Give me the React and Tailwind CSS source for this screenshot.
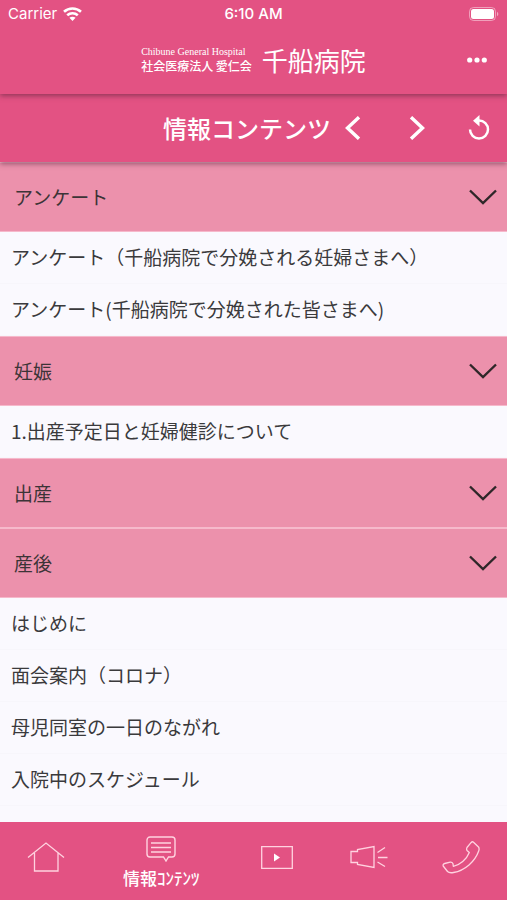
import { useState } from 'react';

const sections = [
  {
    id: 'survey',
    title: 'アンケート',
    items: ['アンケート（千船病院で分娩される妊婦さまへ）', 'アンケート(千船病院で分娩された皆さまへ)'],
  },
  { id: 'pregnancy', title: '妊娠', items: ['1.出産予定日と妊婦健診について'] },
  { id: 'birth', title: '出産', items: [] },
  {
    id: 'after',
    title: '産後',
    items: ['はじめに', '面会案内（コロナ）', '母児同室の一日のながれ', '入院中のスケジュール', '・沐浴のしかた'],
  },
];

const HomeIcon = () => (
  <svg width="38" height="30" viewBox="0 0 38 30" fill="none" stroke="currentColor" strokeWidth="1.3">
    <path d="M1 15.500 19 1l18 14.500M7.500 11v18h23.500V11" />
  </svg>
);

const ContentsIcon = () => (
  <svg width="30" height="26" viewBox="0 0 30 26" fill="none" stroke="currentColor" strokeWidth="1.4">
    <path d="M4 1h22a3 3 0 0 1 3 3v14a3 3 0 0 1-3 3h-3.500L20 25l-2.500-4H4a3 3 0 0 1-3-3V4a3 3 0 0 1 3-3z" />
    <path d="M5 7h20M5 11.500h20M5 16h20" />
  </svg>
);

const MovieIcon = () => (
  <svg width="32" height="23" viewBox="0 0 32 23" fill="none" stroke="currentColor" strokeWidth="1.3">
    <path d="M.7.700h30.600v21.600H.7z" />
    <path d="M13 7.500v8l6-4z" fill="#fff" stroke="none" />
  </svg>
);

const NewsIcon = () => (
  <svg width="38" height="24" viewBox="0 0 38 24" fill="none" stroke="currentColor" strokeWidth="1.3">
    <path d="M1 6.500h6.500V4.500L24 1.500v21L7.500 19.500v-2H1z" />
    <path d="M27.500 7.500 35 2.500M28 12.500h9.500M27.500 17 35 21.500" />
  </svg>
);

const PhoneIcon = () => (
  <svg width="38" height="33" viewBox="0 0 38 33" fill="none" stroke="currentColor" strokeWidth="1.3" strokeLinejoin="round">
    <path d="M31.500 1.200 36.500 6c.800 1 .700 2.500.200 4C33 20.500 23 29.500 11.500 31.500c-2.500.500-4.500.500-6-1L1.200 25c-.400-1.500.300-2.200 1.500-2.500l5.500-1.300c1.500-.200 2.200.300 2.800 1.500l.300 2.600C18 24 24.500 18.500 27.300 11.500L25 9.500c-.500-1-.500-2 0-3l4-4.800c.800-.900 1.700-1.200 2.500-.500z" />
  </svg>
);

const tabs = [
  { id: 'home', label: 'ホーム', Icon: HomeIcon },
  { id: 'contents', label: '情報ｺﾝﾃﾝﾂ', Icon: ContentsIcon },
  { id: 'movie', label: '動画', Icon: MovieIcon },
  { id: 'news', label: 'お知らせ', Icon: NewsIcon },
  { id: 'phone', label: '電話', Icon: PhoneIcon },
];

function StatusBar() {
  return (
    <div className="grid grid-cols-3 items-center h-7 px-2 text-[15px] font-['Inter',sans-serif]">
      <div className="flex items-center gap-1.5">
        <span>Carrier</span>
        <svg width="19" height="14" viewBox="0 0 19 14" fill="none" stroke="currentColor" strokeWidth="2.6">
          <path d="M1 4.800C5.800.400 13.200.400 18 4.800M4.200 8.300c3-2.700 7.600-2.700 10.600 0" />
          <path d="M9.500 14 6.400 10.800c1.800-1.500 4.400-1.500 6.200 0z" fill="currentColor" stroke="none" />
        </svg>
      </div>
      <span className="text-center font-medium">6:10 AM</span>
      <svg className="justify-self-end" width="30" height="14" viewBox="0 0 30 14" fill="none">
        <rect x=".5" y=".5" width="26" height="13" rx="4" stroke="currentColor" strokeOpacity=".45" />
        <rect x="2" y="2" width="23" height="10" rx="2.500" fill="currentColor" />
        <path d="M28 4.800c1.800.800 1.800 3.600 0 4.400z" fill="currentColor" fillOpacity=".5" />
      </svg>
    </div>
  );
}

function Section({ section, open, onToggle }) {
  return (
    <section>
      <h2>
        <button
          type="button"
          aria-expanded={open}
          onClick={onToggle}
          className="flex items-center justify-between w-full h-[70px] pl-3.5 pr-2.5 bg-[#ec91ac] border-y border-[#f6b9cb] text-[19px] text-[#3c3437]"
        >
          {section.title}
          <svg width="28" height="16" viewBox="0 0 28 16" fill="none" stroke="#2f2729" strokeWidth="2.4">
            <path d="M1 1.500 14 14 27 1.500" />
          </svg>
        </button>
      </h2>
      {open && (
        <ul>
          {section.items.map((item) => (
            <li key={item} className="border-b border-[#f7f6fb]">
              <a href="#" className="flex items-center h-[51px] px-[11px] whitespace-nowrap">
                {item}
              </a>
            </li>
          ))}
        </ul>
      )}
    </section>
  );
}

export default function App() {
  const [closed, setClosed] = useState([]);
  const [activeTab, setActiveTab] = useState('contents');

  const toggle = (id) => {
    setClosed(closed.includes(id) ? closed.filter((c) => c !== id) : [...closed, id]);
  };

  return (
    <div className="flex flex-col h-screen bg-[#faf9fe] text-[19px] text-[#3a3a3c] font-['Noto_Sans_CJK_JP',sans-serif]">
      {/* Header */}
      <header className="relative z-20 bg-[#e35283] text-white shadow-[0_2px_5px_rgba(70,30,50,0.5)]">
        <StatusBar />
        <div className="grid grid-cols-[1fr_auto_1fr] items-center h-16 mb-0.5 px-2">
          <div className="col-start-2 flex items-center gap-2.5">
            <div>
              <p className="font-['Liberation_Serif',serif] text-[10px] leading-3">Chibune General Hospital</p>
              <p className="text-[12px] leading-4 font-medium">社会医療法人 愛仁会</p>
            </div>
            <h1 className="text-[26px] leading-8">千船病院</h1>
          </div>
          <button type="button" aria-label="メニュー" className="justify-self-end flex justify-center w-11 py-3">
            <svg width="20" height="6" viewBox="0 0 20 6" fill="currentColor">
              <circle cx="2.700" cy="3" r="2.600" />
              <circle cx="10" cy="3" r="2.600" />
              <circle cx="17.300" cy="3" r="2.600" />
            </svg>
          </button>
        </div>
      </header>

      {/* Page toolbar */}
      <div className="relative z-10 flex items-center justify-end h-17 pr-1 bg-[#e35283] text-white shadow-[0_2px_5px_rgba(70,30,50,0.5)]">
        <p className="text-[24px] font-medium">情報コンテンツ</p>
        <button type="button" aria-label="戻る" className="flex justify-center w-11 py-3">
          <svg width="16" height="24" viewBox="0 0 16 24" fill="none" stroke="currentColor" strokeWidth="3.4">
            <path d="M14 1.200 2.500 12 14 22.800" />
          </svg>
        </button>
        <button type="button" aria-label="進む" className="flex justify-center w-11 py-3 ml-5">
          <svg width="16" height="24" viewBox="0 0 16 24" fill="none" stroke="currentColor" strokeWidth="3.4">
            <path d="M2 1.200 13.500 12 2 22.800" />
          </svg>
        </button>
        <button type="button" aria-label="再読み込み" className="flex justify-center w-12 py-3 ml-4">
          <svg width="22" height="26" viewBox="0 0 22 26" fill="none">
            <path d="M2 14.500a9 9 0 1 0 9-9" stroke="currentColor" strokeWidth="2.500" />
            <path d="M11.500 0v11.500L5 5.700z" fill="currentColor" />
          </svg>
        </button>
      </div>

      {/* Contents list */}
      <main className="flex-1 min-h-0 overflow-y-auto [scrollbar-width:none]">
        {sections.map((section) => (
          <Section
            key={section.id}
            section={section}
            open={!closed.includes(section.id)}
            onToggle={() => toggle(section.id)}
          />
        ))}
      </main>

      {/* Bottom tabs */}
      <nav className="flex h-[78px] bg-[#e35283] text-[#ffd3e0]">
        {tabs.map(({ id, label, Icon }) =>
          id === activeTab ? (
            <button key={id} type="button" aria-current="page" className="flex-[1.5] flex flex-col items-center pt-3.5 gap-1">
              <Icon />
              <span className="text-[17px] leading-6 font-medium text-white whitespace-nowrap">{label}</span>
            </button>
          ) : (
            <button
              key={id}
              type="button"
              aria-label={label}
              onClick={() => setActiveTab(id)}
              className="flex-1 flex items-center justify-center pb-2"
            >
              <Icon />
            </button>
          )
        )}
      </nav>
    </div>
  );
}
